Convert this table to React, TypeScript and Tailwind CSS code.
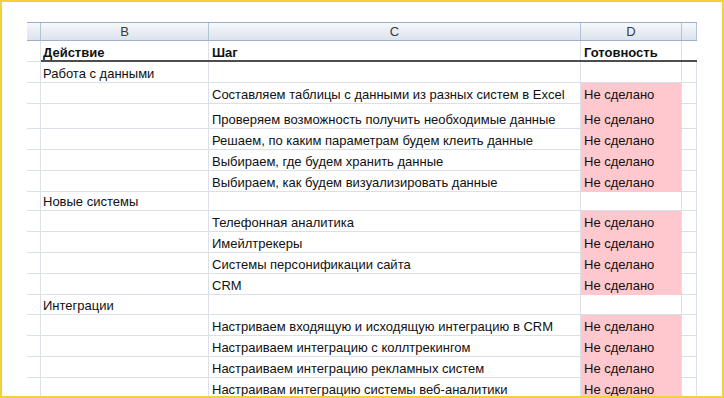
type Row = {
  b?: string;
  c?: string;
  d?: string;
  h: string;
};

const ROWS: Row[] = [
  { b: 'Работа с данными', h: 'h-[21px]' },
  { c: 'Составляем таблицы с данными из разных систем в Excel', d: 'Не сделано', h: 'h-[21px]' },
  { c: 'Проверяем возможность получить необходимые данные', d: 'Не сделано', h: 'h-[25px]' },
  { c: 'Решаем, по каким параметрам будем клеить данные', d: 'Не сделано', h: 'h-[21px]' },
  { c: 'Выбираем, где будем хранить данные', d: 'Не сделано', h: 'h-[21px]' },
  { c: 'Выбираем, как будем визуализировать данные', d: 'Не сделано', h: 'h-[21px]' },
  { b: 'Новые системы', h: 'h-[19px]' },
  { c: 'Телефонная аналитика', d: 'Не сделано', h: 'h-[21px]' },
  { c: 'Имейлтрекеры', d: 'Не сделано', h: 'h-[21px]' },
  { c: 'Системы персонификации сайта', d: 'Не сделано', h: 'h-[21px]' },
  { c: 'CRM', d: 'Не сделано', h: 'h-[21px]' },
  { b: 'Интеграции', h: 'h-[20px]' },
  { c: 'Настриваем входящую и исходящую интеграцию в CRM', d: 'Не сделано', h: 'h-[21px]' },
  { c: 'Настраиваем интеграцию с коллтрекингом', d: 'Не сделано', h: 'h-[21px]' },
  { c: 'Настраиваем интеграцию рекламных систем', d: 'Не сделано', h: 'h-[21px]' },
  { c: 'Настраивам интеграцию системы веб-аналитики', d: 'Не сделано', h: 'h-[21px]' },
];

const cell = 'flex items-end pb-px whitespace-nowrap border-r border-b border-[#dadfe8]';

function ColHead({ label, w }: { label?: string; w: string }) {
  return (
    <div className={`${w} h-full flex items-center justify-center border-r border-[#b3c3d6] text-[#3b3b3b]`}>
      {label}
    </div>
  );
}

export default function App() {
  return (
    <div className="w-[724px] h-[398px] overflow-hidden bg-white border-2 border-[#f3d03c] font-['Liberation_Sans',Arial,sans-serif] text-[13px] leading-[15px] text-[#111]">
      <div className="pt-[20px] pl-[25px]">
        {/* column letters */}
        <div className="flex h-[19px] w-[670px] border-t border-b border-[#9fb0c6] bg-gradient-to-b from-[#f6f8fb] to-[#dce3ed]">
          <ColHead w="w-[14px]" />
          <ColHead w="w-[168px]" label="B" />
          <ColHead w="w-[372px]" label="C" />
          <ColHead w="w-[101px]" label="D" />
          <ColHead w="w-[15px]" />
        </div>

        {/* bold header row */}
        <div className="flex h-[21px] font-bold">
          <div className={`${cell} w-[14px]`} />
          <div className="w-[656px] flex border-b-2 border-[#4d4d4d]">
            <div className="w-[168px] flex items-end pl-[2px] border-r border-[#dadfe8]">Действие</div>
            <div className="w-[372px] flex items-end pl-[3px] border-r border-[#dadfe8]">Шаг</div>
            <div className="w-[101px] flex items-end pl-[3px] border-r border-[#dadfe8]">Готовность</div>
            <div className="w-[15px]" />
          </div>
        </div>

        {ROWS.map((r, i) => (
          <div key={i} className={`flex ${r.h}`}>
            <div className={`${cell} w-[14px]`} />
            <div className={`${cell} w-[168px] pl-[2px]`}>{r.b}</div>
            <div className={`${cell} w-[372px] pl-[3px]`}>{r.c}</div>
            <div
              className={
                r.d
                  ? 'flex items-end pb-px whitespace-nowrap w-[101px] pl-[3px] bg-[#ffc7ce] border-r border-b border-r-[#dadfe8] border-b-[#ffc7ce]'
                  : `${cell} w-[101px] pl-[3px]`
              }
            >
              {r.d}
            </div>
            <div className={`${cell} w-[15px]`} />
          </div>
        ))}
      </div>
    </div>
  );
}
